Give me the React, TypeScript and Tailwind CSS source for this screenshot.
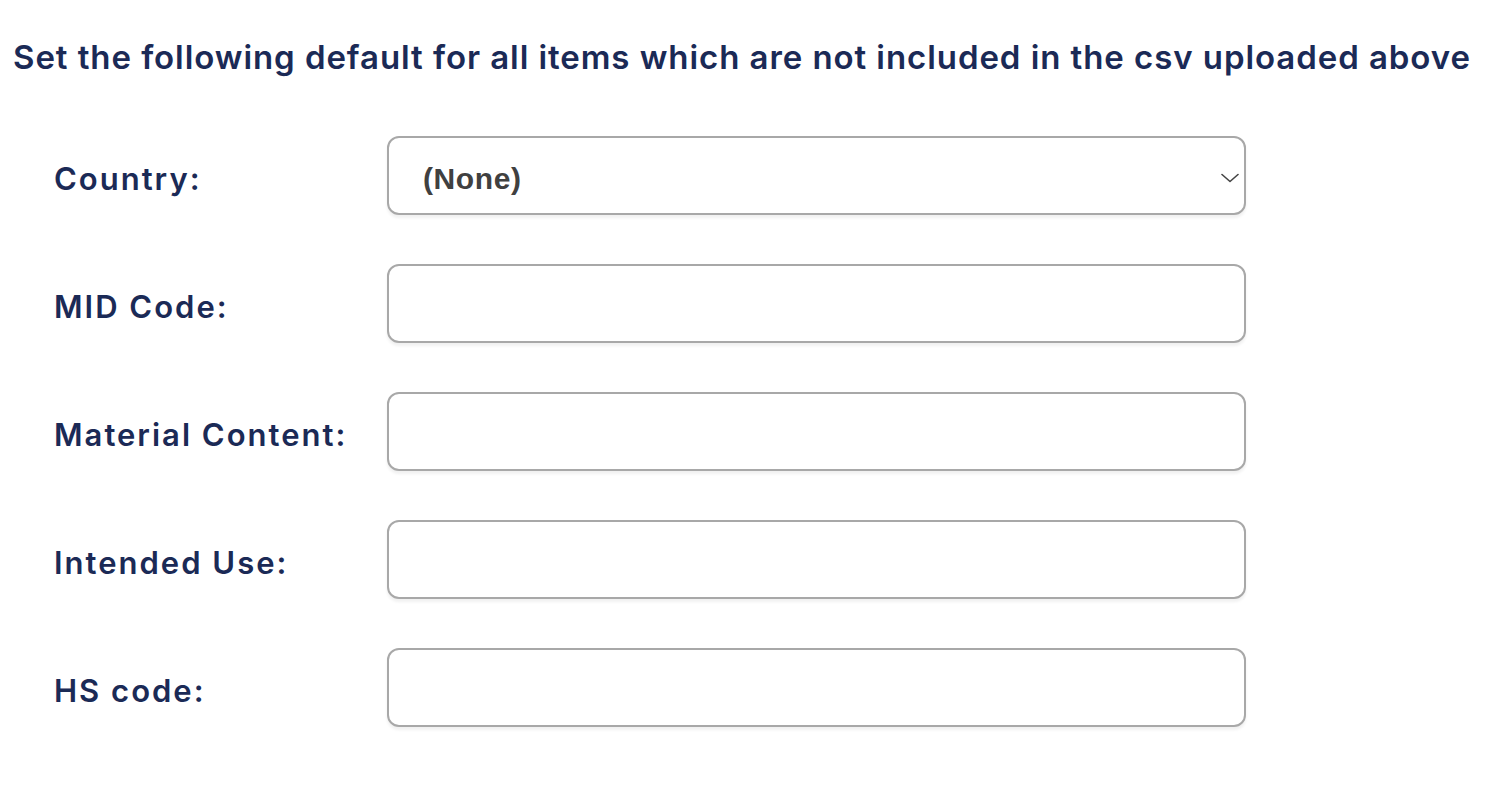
const fields = ["MID Code:", "Material Content:", "Intended Use:", "HS code:"];

function Row({ label, children }: { label: string; children: React.ReactNode }) {
    return (
        <div className="flex items-center h-[79px]">
            <label className="w-[333px] shrink-0 text-[31px] font-semibold text-[#1b2a56] tracking-[2px] pt-[7px]">
                {label}
            </label>
            {children}
        </div>
    );
}

export default function App() {
    return (
        <div className="min-h-screen bg-white font-['Inter',sans-serif]">
            <div className="pt-[37px] pl-[13px]">
                <h2 className="text-[33px] font-semibold leading-[40px] text-[#1b2a56] tracking-[0.93px] whitespace-nowrap">
                    Set the following default for all items which are not included in the csv uploaded above
                </h2>
            </div>

            <div className="pl-[54px] pt-[59px] flex flex-col gap-[49px]">
                <Row label="Country:">
                    <div className="relative w-[859px] h-[79px] rounded-[12px] border-2 border-[#a8a8a8] bg-white shadow-[0_3px_3px_rgba(0,0,0,0.06)] flex items-center pl-[34px] pt-[6px]">
                        <span className="font-['Liberation_Sans',Arial,sans-serif] font-bold text-[30px] tracking-[0.6px] text-[#404040]">
                            (None)
                        </span>
                        <svg
                            className="absolute right-[5px] top-[35px]"
                            width="18"
                            height="10"
                            viewBox="0 0 18 10"
                            fill="none"
                            stroke="#444"
                            strokeWidth="1.6"
                            strokeLinecap="round"
                            strokeLinejoin="round"
                        >
                            <path d="M1 1.5 L9 8.5 L17 1.5" />
                        </svg>
                    </div>
                </Row>
                {fields.map((f) => (
                    <Row key={f} label={f}>
                        <input
                            type="text"
                            className="w-[859px] h-[79px] rounded-[12px] border-2 border-[#a8a8a8] bg-white shadow-[0_3px_3px_rgba(0,0,0,0.06)] outline-none px-4"
                        />
                    </Row>
                ))}
            </div>
        </div>
    );
}
